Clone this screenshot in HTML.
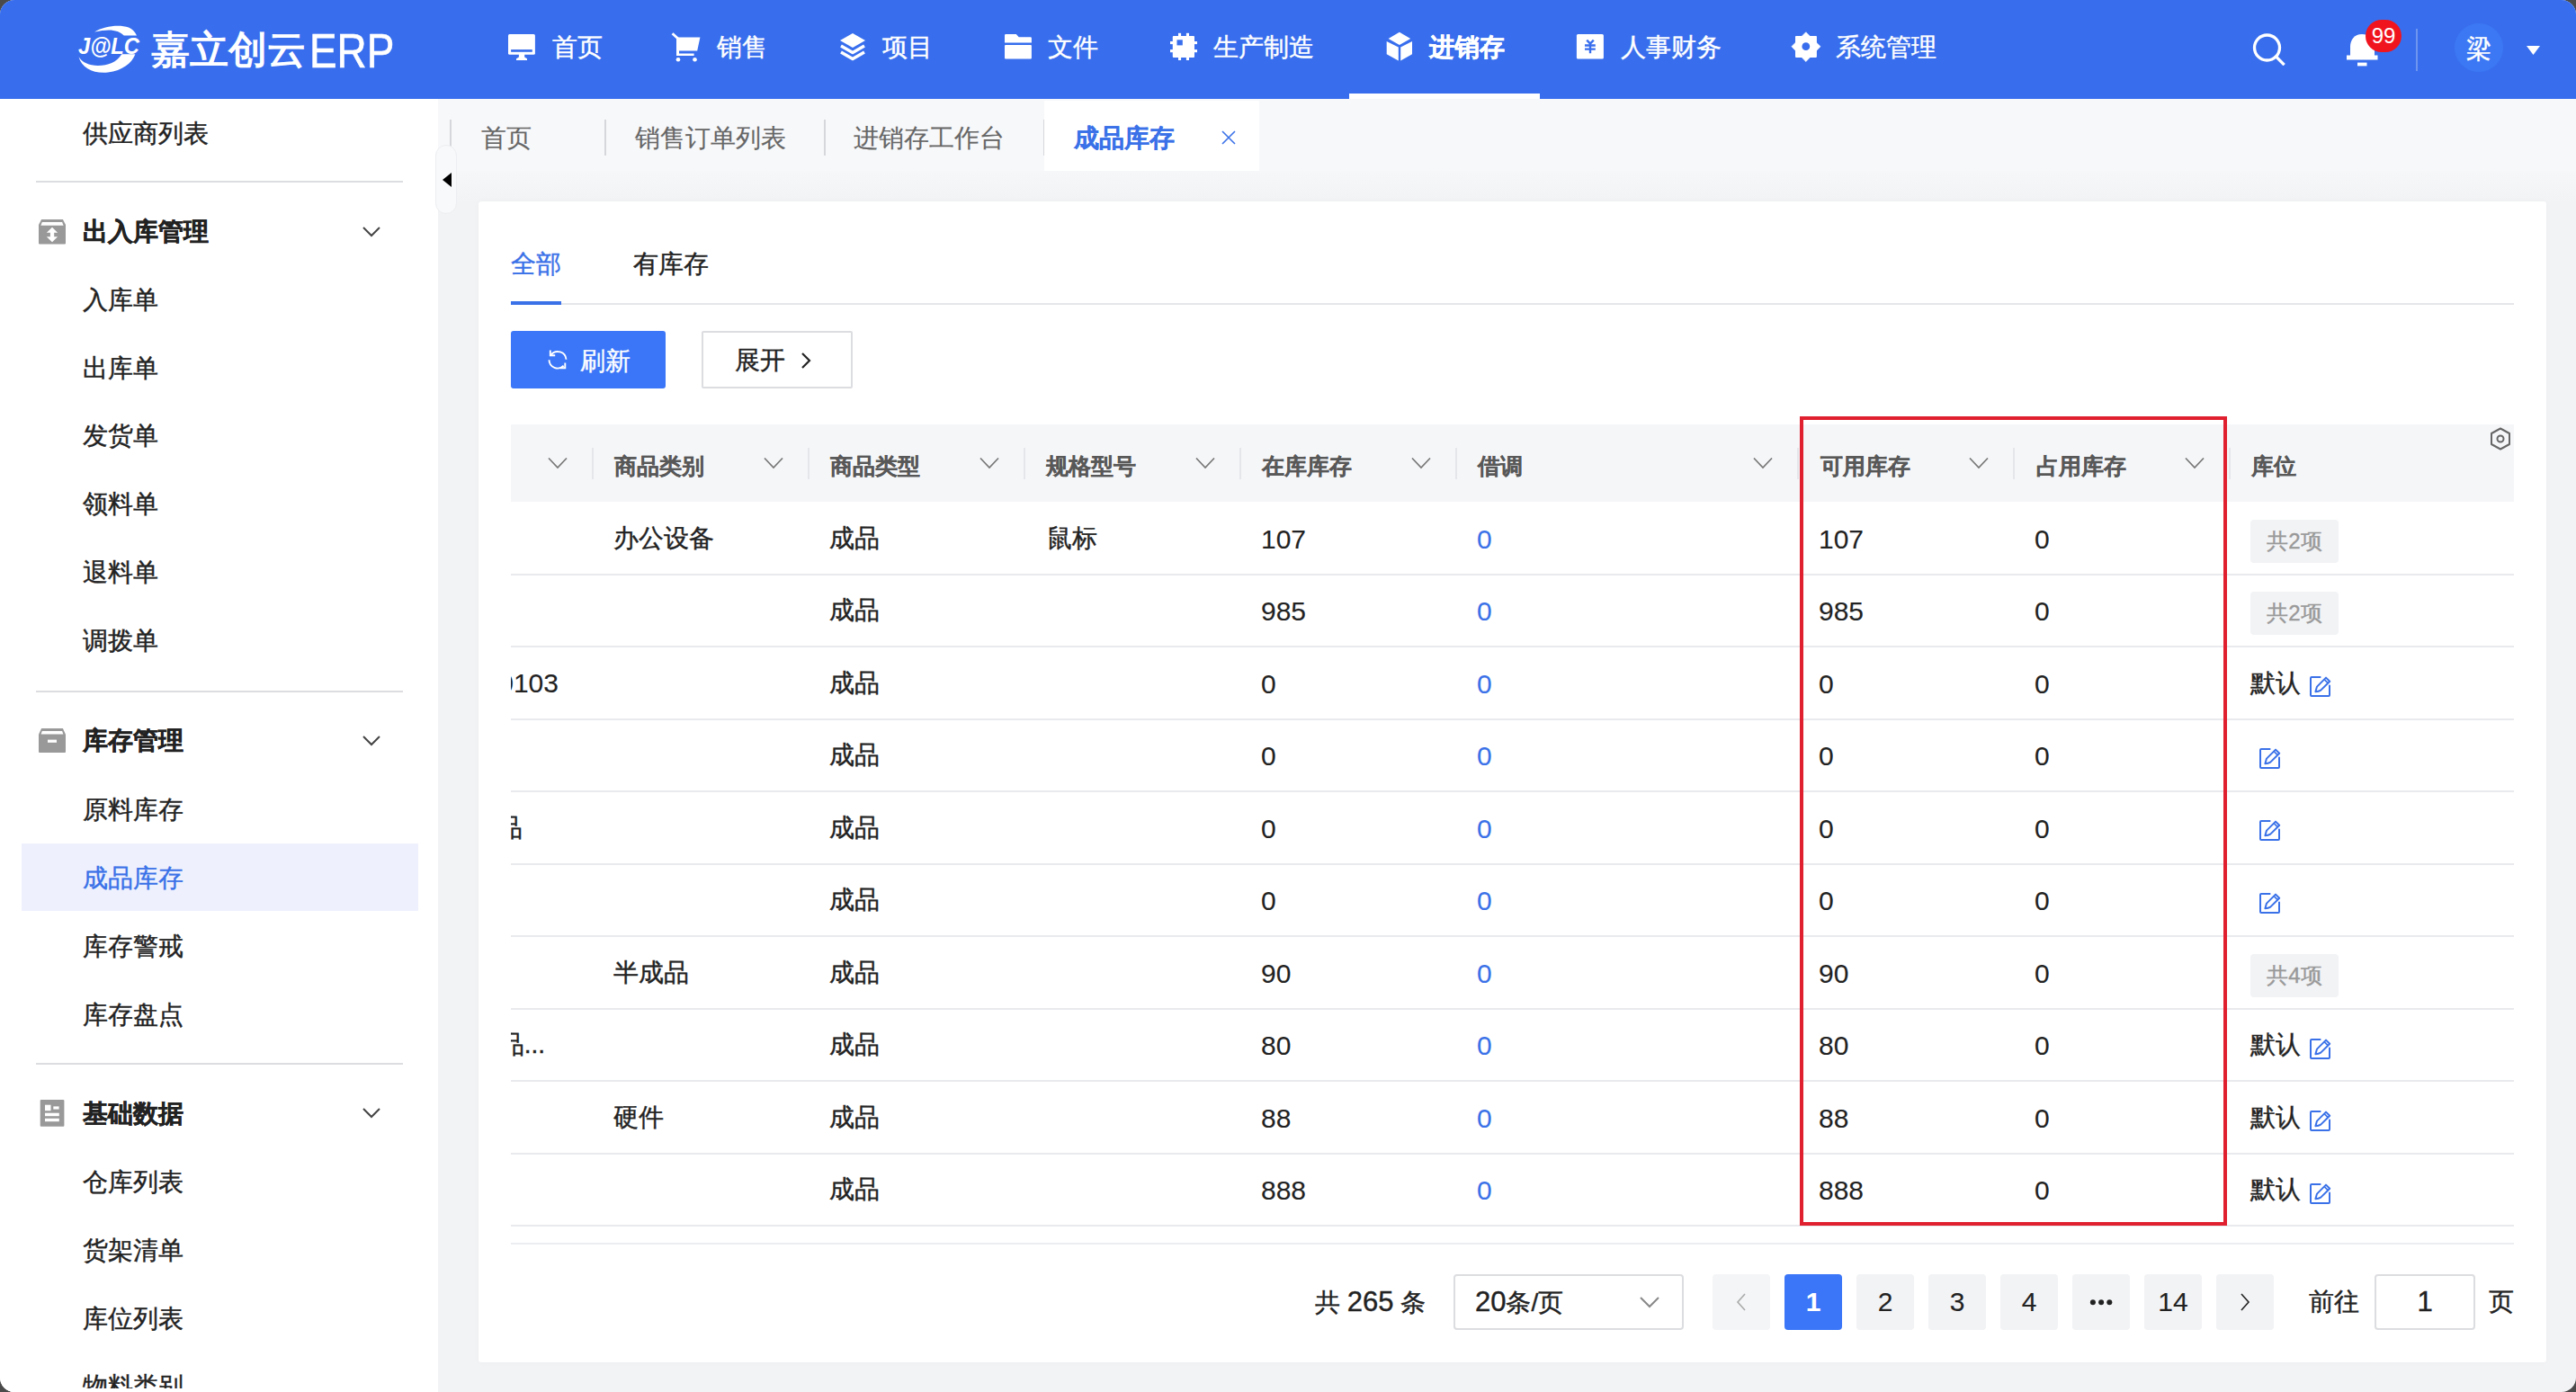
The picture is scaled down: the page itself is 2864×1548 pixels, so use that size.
<!DOCTYPE html>
<html><head><meta charset="utf-8">
<style>
*{box-sizing:border-box;margin:0;padding:0}
html,body{width:2864px;height:1548px;overflow:hidden;background:#4a4a4a;font-family:"Liberation Sans",sans-serif;-webkit-text-stroke-width:0.4px}
#app{position:absolute;left:0;top:0;width:2864px;height:1548px;border-radius:16px;overflow:hidden;background:#f2f3f5}
.a{position:absolute;white-space:nowrap}
.hdr{position:absolute;left:0;top:0;width:2864px;height:110px;background:#386eed}
.nav{position:absolute;top:25px;height:56px;line-height:56px;font-size:28px;color:#fff}
.navic{position:absolute}
.side{position:absolute;left:0;top:110px;width:487px;height:1438px;background:#fff}
.si{position:absolute;left:92px;font-size:28px;line-height:40px;color:#222}
.sh{position:absolute;left:92px;font-size:28px;line-height:40px;color:#222;font-weight:bold}
.sdiv{position:absolute;left:40px;width:408px;height:2px;background:#dcdde0}
.schev{position:absolute;left:403px}
.tabbar{position:absolute;left:487px;top:110px;width:2377px;height:80px;background:#f7f8fa}
.tabgrad{position:absolute;left:487px;top:190px;width:2377px;height:34px;background:linear-gradient(#f6f7f9,#f2f3f5)}
.tab{position:absolute;top:134px;font-size:28px;line-height:40px;color:#666;-webkit-text-stroke-width:0.15px}
.tdiv{position:absolute;top:133px;width:2px;height:40px;background:#d6d7da}
.card{position:absolute;left:532px;top:224px;width:2299px;height:1291px;background:#fff;border-radius:3px;box-shadow:0 0 6px rgba(0,0,0,0.03)}
.th{position:absolute;top:500px;font-size:25px;line-height:36px;color:#585858;font-weight:bold;-webkit-text-stroke-width:0.15px}
.hch{position:absolute;top:508px}
.hdiv{position:absolute;top:498px;width:2px;height:35px;background:#e4e6ea}
.rdiv{position:absolute;left:568px;width:2227px;height:2px;background:#e9eaed}
.c{position:absolute;font-size:28px;line-height:40px;color:#222}
.n{position:absolute;font-size:30px;line-height:40px;color:#222;-webkit-text-stroke-width:0.1px}
.bl{color:#3a71e8}
.tag{position:absolute;left:2502px;width:98px;height:48px;background:#f2f3f5;border-radius:4px;color:#999;font-size:24px;line-height:48px;text-align:center}
.pg{position:absolute;top:1417px;width:64px;height:62px;background:#f2f3f5;border-radius:4px;font-size:30px;line-height:62px;text-align:center;color:#222;-webkit-text-stroke-width:0.1px}
</style></head><body>
<div id="app">
<!-- HEADER -->
<div class="hdr"></div>
<svg class="a" style="left:80px;top:20px" width="90" height="70" viewBox="0 0 90 70">
 <path d="M25,15.6 C36,9 52,7 63,10.5 C67,12 70,15 72,19.6 L57.8,19.6 C52,13.5 42,11.5 25,15.6 Z" fill="#fff"/>
 <path d="M7.5,43.2 C11,56 24,62 40,60.5 C56,58.5 67,50 70.4,40.2 L55.3,40.2 C50,49 40,53 29,53 C19,53 11,49 7.5,43.2 Z" fill="#fff"/>
 <text x="7" y="39.7" font-family="Liberation Sans" font-weight="bold" font-style="italic" font-size="25.5" textLength="68" lengthAdjust="spacingAndGlyphs" fill="#fff">J@LC</text>
</svg>
<div class="a" style="left:168px;top:25px;font-size:43px;line-height:60px;color:#fff;-webkit-text-stroke:1.3px #fff">嘉立创云</div><div class="a" style="left:344px;top:21px;font-size:54px;line-height:70px;color:#fff;transform:scaleX(0.85);transform-origin:0 0;-webkit-text-stroke:0.6px #fff">ERP</div>

<!-- nav icons -->
<svg class="navic" style="left:564px;top:37px" width="32" height="32" viewBox="0 0 32 32"><rect x="1" y="1" width="29.9" height="22.7" rx="1.5" fill="#fff"/><rect x="4.1" y="18.1" width="23.7" height="2.7" fill="#386eed"/><path d="M12.9,23 L19.2,23 L19.2,26.6 L22,28.2 L22,30 L10,30 L10,28.2 L12.9,26.6 Z" fill="#fff"/></svg>
<div class="nav" style="left:614px">首页</div>
<svg class="navic" style="left:746px;top:36px" width="34" height="34" viewBox="0 0 34 34"><path d="M1.6,1.2 L7.6,6.8" stroke="#fff" stroke-width="2.8"/><path d="M6,5.5 L32.4,5.5 L29.2,20.4 L9,20.4 L9,23.6 L25.6,23.6 L25.6,26.1 L6,26.1 Z" fill="#fff"/><circle cx="8" cy="30.3" r="2.3" fill="#fff"/><circle cx="26.5" cy="30.3" r="2.3" fill="#fff"/></svg>
<div class="nav" style="left:797px">销售</div>
<svg class="navic" style="left:932px;top:36px" width="32" height="32" viewBox="0 0 32 32"><path d="M16 1 L30 9 L16 17 L2 9 Z" fill="#fff"/><path d="M3 15 L16 22.5 L29 15" stroke="#fff" stroke-width="3.5" fill="none" stroke-linejoin="round"/><path d="M3 22 L16 29.5 L29 22" stroke="#fff" stroke-width="3.5" fill="none" stroke-linejoin="round"/></svg>
<div class="nav" style="left:981px">项目</div>
<svg class="navic" style="left:1116px;top:37px" width="32" height="30" viewBox="0 0 32 30"><path d="M1,2.2 Q1,1 2.2,1 L13.8,1 L16.7,4.3 L29.7,4.3 Q30.9,4.3 30.9,5.5 L30.9,10.6 L1,10.6 Z" fill="#fff"/><rect x="1" y="12.9" width="29.9" height="15.6" rx="1" fill="#fff"/></svg>
<div class="nav" style="left:1165px">文件</div>
<svg class="navic" style="left:1300px;top:36px" width="32" height="32" viewBox="0 0 32 32"><rect x="3.8" y="3.9" width="24.2" height="24" rx="1" fill="#fff"/><g fill="#fff"><rect x="10" y="0.8" width="3.1" height="3.5"/><rect x="18.9" y="0.8" width="3.1" height="3.5"/><rect x="10" y="27.5" width="3.1" height="3.5"/><rect x="18.9" y="27.5" width="3.1" height="3.5"/><rect x="1" y="10" width="3.2" height="3.1"/><rect x="1" y="19.1" width="3.2" height="3.1"/><rect x="27.6" y="10" width="3.4" height="3.1"/><rect x="27.6" y="19.1" width="3.4" height="3.1"/></g><rect x="8.5" y="8.3" width="6.3" height="6.1" fill="#386eed"/></svg>
<div class="nav" style="left:1349px">生产制造</div>
<svg class="navic" style="left:1540px;top:34px" width="32" height="36" viewBox="0 0 32 36"><path d="M15.9,1.7 L28.2,9.1 L15.9,15.9 L3.6,9.1 Z" fill="#fff"/><path d="M1.7,12 L14.8,18.6 L14.8,33.5 L1.7,26.3 Z" fill="#fff"/><path d="M30,12 L17.2,18.6 L17.2,33.5 L30,26.3 Z" fill="#fff"/></svg>
<div class="nav" style="left:1589px;font-weight:bold">进销存</div>
<div class="a" style="left:1500px;top:104px;width:212px;height:6px;background:#fff"></div>
<svg class="navic" style="left:1752px;top:38px" width="32" height="28" viewBox="0 0 32 28"><rect x="0.9" y="0" width="30" height="27.5" rx="1.5" fill="#fff"/><path d="M12.2,6.7 L16,10.6 L19.8,6.7 M10,12.5 L21.8,12.5 M10,16.6 L21.8,16.6 M16,10.6 L16,21.3" stroke="#386eed" stroke-width="2.4" fill="none"/></svg>
<div class="nav" style="left:1802px">人事财务</div>
<svg class="navic" style="left:1990px;top:35px" width="36" height="36" viewBox="0 0 36 36"><path d="M17.8,0.7 L34,16.7 L17.8,33.6 L1.9,16.7 Z" fill="#fff" stroke="#fff" stroke-width="0.6" stroke-linejoin="round"/><rect x="6" y="4.9" width="23.9" height="24" rx="0.8" fill="#fff"/><circle cx="17.8" cy="16.7" r="4.4" fill="#386eed"/></svg>
<div class="nav" style="left:2041px">系统管理</div>
<!-- right icons -->
<svg class="a" style="left:2504px;top:36px" width="38" height="37" viewBox="0 0 38 37"><circle cx="16.5" cy="17" r="14" stroke="#fff" stroke-width="3.3" fill="none"/><path d="M26.5 27 L34.5 35" stroke="#fff" stroke-width="3.3" stroke-linecap="square"/></svg>
<svg class="a" style="left:2609px;top:36px" width="36" height="38" viewBox="0 0 36 38"><path d="M17 2 C9 2 4 8 4 16 L4 26 L31 26 L31 16 C31 8 25 2 17 2 Z" fill="#fff"/><rect x="0" y="25.5" width="34.5" height="5" fill="#fff"/><rect x="12" y="33.6" width="10.5" height="3.8" fill="#fff"/></svg>
<div class="a" style="left:2630px;top:22px;width:40px;height:36px;border-radius:18px;background:#f0141e;color:#fff;font-size:24px;line-height:36px;text-align:center;-webkit-text-stroke-width:0">99</div>
<div class="a" style="left:2686px;top:32px;width:2px;height:47px;background:#6e96f0"></div>
<div class="a" style="left:2729px;top:26px;width:54px;height:54px;border-radius:27px;background:#3c78f3"></div>
<div class="a" style="left:2742px;top:35px;font-size:28px;line-height:40px;color:#fff">梁</div>
<svg class="a" style="left:2809px;top:51px" width="15" height="10" viewBox="0 0 15 10"><path d="M0 0 L15 0 L7.5 10 Z" fill="#fff"/></svg>

<!-- SIDEBAR -->
<div class="side"></div>
<div class="si" style="top:129px">供应商列表</div>
<div class="sdiv" style="top:201px"></div>
<svg class="a" style="left:43px;top:244px" width="30" height="28" viewBox="0 0 30 28"><path d="M3.1,0 L26.9,0 L30,6 L30,26.6 Q30,27.6 29,27.6 L1,27.6 Q0,27.6 0,26.6 L0,6 Z" fill="#999"/><path d="M3.8,3 L26.1,3 L27.6,6.7 L2.4,6.7 Z" fill="#fff"/><path d="M15,8.8 L21.1,14.7 L17.2,14.7 L17.2,19.2 L21.1,19.2 L15,25.2 L8.8,19.2 L12.9,19.2 L12.9,14.7 L8.8,14.7 Z" fill="#fff"/></svg>
<div class="sh" style="top:238px">出入库管理</div>
<svg class="schev" style="top:252px" width="20" height="12" viewBox="0 0 20 12"><path d="M1 1 L10 10 L19 1" stroke="#444" stroke-width="2" fill="none"/></svg>
<div class="si" style="top:314px">入库单</div>
<div class="si" style="top:390px">出库单</div>
<div class="si" style="top:465px">发货单</div>
<div class="si" style="top:541px">领料单</div>
<div class="si" style="top:617px">退料单</div>
<div class="si" style="top:693px">调拨单</div>
<div class="sdiv" style="top:768px"></div>
<svg class="a" style="left:43px;top:810px" width="30" height="28" viewBox="0 0 30 28"><path d="M3.1,0 L26.9,0 L30,6.7 L30,26 Q30,27 29,27 L1,27 Q0,27 0,26 L0,6.7 Z" fill="#999"/><path d="M3.8,2.9 L26.1,2.9 L27.4,6.5 L2.6,6.5 Z" fill="#fff"/><rect x="10" y="12.6" width="10" height="3.2" fill="#fff"/></svg>
<div class="sh" style="top:804px">库存管理</div>
<svg class="schev" style="top:818px" width="20" height="12" viewBox="0 0 20 12"><path d="M1 1 L10 10 L19 1" stroke="#444" stroke-width="2" fill="none"/></svg>
<div class="si" style="top:881px">原料库存</div>
<div class="a" style="left:24px;top:938px;width:441px;height:75px;background:#eef1fd"></div>
<div class="si" style="top:957px;color:#3a71e8">成品库存</div>
<div class="si" style="top:1033px">库存警戒</div>
<div class="si" style="top:1109px">库存盘点</div>
<div class="sdiv" style="top:1182px"></div>
<svg class="a" style="left:44px;top:1222px" width="28" height="31" viewBox="0 0 28 31"><rect x="0.7" y="0.9" width="26.7" height="29.9" rx="1" fill="#999"/><rect x="6" y="6.7" width="6.5" height="6.5" fill="#fff"/><rect x="15.3" y="8.4" width="6.3" height="3.2" fill="#fff"/><rect x="6" y="15.7" width="15.8" height="3.5" fill="#fff"/><rect x="6" y="21.8" width="15.8" height="3.4" fill="#fff"/></svg>
<div class="sh" style="top:1219px">基础数据</div>
<svg class="schev" style="top:1232px" width="20" height="12" viewBox="0 0 20 12"><path d="M1 1 L10 10 L19 1" stroke="#444" stroke-width="2" fill="none"/></svg>
<div class="si" style="top:1295px">仓库列表</div>
<div class="si" style="top:1371px">货架清单</div>
<div class="si" style="top:1447px">库位列表</div>
<div class="si" style="top:1522px">物料类别</div>
<div class="a" style="left:0;top:1544px;width:487px;height:4px;background:#fff"></div>

<!-- TAB BAR -->
<div class="tabbar"></div><div class="tabgrad"></div>
<div class="tdiv" style="left:500px"></div>
<div class="tab" style="left:535px">首页</div>
<div class="tdiv" style="left:672px"></div>
<div class="tab" style="left:706px">销售订单列表</div>
<div class="tdiv" style="left:916px"></div>
<div class="tab" style="left:949px">进销存工作台</div>
<div class="tdiv" style="left:1160px"></div>
<div class="a" style="left:1161px;top:112px;width:239px;height:78px;background:#fff"></div>
<div class="tab" style="left:1194px;color:#3a71e8;font-weight:bold">成品库存</div>
<svg class="a" style="left:1358px;top:145px" width="16" height="16" viewBox="0 0 16 16"><path d="M1 1 L15 15 M15 1 L1 15" stroke="#3a71e8" stroke-width="1.6"/></svg>
<!-- handle -->
<div class="a" style="left:484px;top:161px;width:24px;height:77px;border-radius:12px;background:#f8f9fa;border:1px solid #eceef1"></div>
<svg class="a" style="left:492px;top:192px" width="10" height="16" viewBox="0 0 10 16"><path d="M10 0 L0 8 L10 16 Z" fill="#000"/></svg>

<!-- CARD -->
<div class="card"></div>
<div class="a" style="left:568px;top:274px;font-size:28px;line-height:40px;color:#3a71e8">全部</div>
<div class="a" style="left:704px;top:274px;font-size:28px;line-height:40px;color:#222">有库存</div>
<div class="a" style="left:568px;top:337px;width:2227px;height:2px;background:#e5e6e9"></div>
<div class="a" style="left:568px;top:335px;width:56px;height:4px;background:#3a71e8"></div>
<div class="a" style="left:568px;top:368px;width:172px;height:64px;background:#3a76f7;border-radius:3px"></div>
<svg class="a" style="left:606px;top:386px" width="28" height="28" viewBox="0 0 28 28" fill="none" stroke="#fff" stroke-width="1.9"><path d="M23.5,13.8 A9.5,9.5 0 0 0 6.6,8.6"/><path d="M5.8,3.6 L5.8,9.3 L11.2,9.3"/><path d="M4.5,14.2 A9.5,9.5 0 0 0 20.6,20.8"/><path d="M22.3,17.6 L22.3,23.3 L16.9,23.3"/></svg>
<div class="a" style="left:645px;top:382px;font-size:28px;line-height:40px;color:#fff">刷新</div>
<div class="a" style="left:780px;top:368px;width:168px;height:64px;background:#fff;border:2px solid #dcdde0;border-radius:2px"></div>
<div class="a" style="left:817px;top:381px;font-size:28px;line-height:40px;color:#222">展开</div>
<svg class="a" style="left:890px;top:392px" width="13" height="18" viewBox="0 0 13 18"><path d="M2 1 L10 9 L2 17" stroke="#222" stroke-width="2.2" fill="none"/></svg>

<!-- TABLE HEADER -->
<div class="a" style="left:568px;top:472px;width:2227px;height:86px;background:#f5f6f8"></div>
<svg class="hch" style="left:609px" width="22" height="14" viewBox="0 0 22 14"><path d="M1 1.5 L11 12 L21 1.5" stroke="#777" stroke-width="1.7" fill="none"/></svg>
<div class="hdiv" style="left:658px"></div>
<div class="th" style="left:683px">商品类别</div>
<svg class="hch" style="left:849px" width="22" height="14" viewBox="0 0 22 14"><path d="M1 1.5 L11 12 L21 1.5" stroke="#777" stroke-width="1.7" fill="none"/></svg>
<div class="hdiv" style="left:898px"></div>
<div class="th" style="left:923px">商品类型</div>
<svg class="hch" style="left:1089px" width="22" height="14" viewBox="0 0 22 14"><path d="M1 1.5 L11 12 L21 1.5" stroke="#777" stroke-width="1.7" fill="none"/></svg>
<div class="hdiv" style="left:1138px"></div>
<div class="th" style="left:1163px">规格型号</div>
<svg class="hch" style="left:1329px" width="22" height="14" viewBox="0 0 22 14"><path d="M1 1.5 L11 12 L21 1.5" stroke="#777" stroke-width="1.7" fill="none"/></svg>
<div class="hdiv" style="left:1378px"></div>
<div class="th" style="left:1403px">在库库存</div>
<svg class="hch" style="left:1569px" width="22" height="14" viewBox="0 0 22 14"><path d="M1 1.5 L11 12 L21 1.5" stroke="#777" stroke-width="1.7" fill="none"/></svg>
<div class="hdiv" style="left:1618px"></div>
<div class="th" style="left:1643px">借调</div>
<svg class="hch" style="left:1949px" width="22" height="14" viewBox="0 0 22 14"><path d="M1 1.5 L11 12 L21 1.5" stroke="#777" stroke-width="1.7" fill="none"/></svg>
<div class="hdiv" style="left:1998px"></div>
<div class="th" style="left:2024px">可用库存</div>
<svg class="hch" style="left:2189px" width="22" height="14" viewBox="0 0 22 14"><path d="M1 1.5 L11 12 L21 1.5" stroke="#777" stroke-width="1.7" fill="none"/></svg>
<div class="hdiv" style="left:2238px"></div>
<div class="th" style="left:2264px">占用库存</div>
<svg class="hch" style="left:2429px" width="22" height="14" viewBox="0 0 22 14"><path d="M1 1.5 L11 12 L21 1.5" stroke="#777" stroke-width="1.7" fill="none"/></svg>
<div class="hdiv" style="left:2478px"></div>
<div class="th" style="left:2503px">库位</div>
<svg class="a" style="left:2768px;top:475px" width="24" height="26" viewBox="0 0 24 26"><path d="M12 1.5 L22 7 L22 19 L12 24.5 L2 19 L2 7 Z" stroke="#666" stroke-width="2" fill="none" stroke-linejoin="round"/><circle cx="12" cy="13" r="3.5" stroke="#666" stroke-width="2" fill="none"/></svg>

<!-- ROWS (generated) -->
<div id="rows"><div class="rdiv" style="top:637.5px"></div>
<div class="c" style="left:682px;top:578.5px">办公设备</div>
<div class="c" style="left:922px;top:578.5px">成品</div>
<div class="c" style="left:1164px;top:578.5px">鼠标</div>
<div class="n" style="left:1402px;top:579.5px">107</div>
<div class="n bl" style="left:1642px;top:579.5px">0</div>
<div class="n" style="left:2022px;top:579.5px">107</div>
<div class="n" style="left:2262px;top:579.5px">0</div>
<div class="tag" style="top:577.5px">共2项</div>
<div class="rdiv" style="top:718.0px"></div>
<div class="c" style="left:922px;top:659.0px">成品</div>
<div class="n" style="left:1402px;top:660.0px">985</div>
<div class="n bl" style="left:1642px;top:660.0px">0</div>
<div class="n" style="left:2022px;top:660.0px">985</div>
<div class="n" style="left:2262px;top:660.0px">0</div>
<div class="tag" style="top:658.0px">共2项</div>
<div class="rdiv" style="top:798.5px"></div>
<div class="a" style="left:568px;top:739.5px;width:60px;height:40px;overflow:hidden"><div class="n" style="right:7px;top:0">20103</div></div>
<div class="c" style="left:922px;top:739.5px">成品</div>
<div class="n" style="left:1402px;top:740.5px">0</div>
<div class="n bl" style="left:1642px;top:740.5px">0</div>
<div class="n" style="left:2022px;top:740.5px">0</div>
<div class="n" style="left:2262px;top:740.5px">0</div>
<div class="c" style="left:2502px;top:739.5px">默认</div>
<div class="a" style="left:2567px;top:751.0px"><svg width="26" height="26" viewBox="0 0 26 26"><path d="M12.6 2 L3 2 Q2 2 2 3 L2 22 Q2 23 3 23 L22 23 Q23 23 23 22 L23 11.6" stroke="#3a71e8" stroke-width="2" fill="none" stroke-linecap="round"/><path d="M7.4 18.2 L9 12.6 L19 2.6 L23.2 6.8 L13.2 16.6 Q11 18 7.4 18.2 Z" stroke="#3a71e8" stroke-width="2" fill="none" stroke-linejoin="round"/><path d="M17.2 4.6 L21.2 8.6" stroke="#3a71e8" stroke-width="1.6"/></svg></div>
<div class="rdiv" style="top:879.0px"></div>
<div class="c" style="left:922px;top:820.0px">成品</div>
<div class="n" style="left:1402px;top:821.0px">0</div>
<div class="n bl" style="left:1642px;top:821.0px">0</div>
<div class="n" style="left:2022px;top:821.0px">0</div>
<div class="n" style="left:2262px;top:821.0px">0</div>
<div class="a" style="left:2511px;top:830.5px"><svg width="26" height="26" viewBox="0 0 26 26"><path d="M12.6 2 L3 2 Q2 2 2 3 L2 22 Q2 23 3 23 L22 23 Q23 23 23 22 L23 11.6" stroke="#3a71e8" stroke-width="2" fill="none" stroke-linecap="round"/><path d="M7.4 18.2 L9 12.6 L19 2.6 L23.2 6.8 L13.2 16.6 Q11 18 7.4 18.2 Z" stroke="#3a71e8" stroke-width="2" fill="none" stroke-linejoin="round"/><path d="M17.2 4.6 L21.2 8.6" stroke="#3a71e8" stroke-width="1.6"/></svg></div>
<div class="rdiv" style="top:959.5px"></div>
<div class="a" style="left:568px;top:900.5px;width:40px;height:40px;overflow:hidden"><div class="c" style="right:27px;top:0">成品</div></div>
<div class="c" style="left:922px;top:900.5px">成品</div>
<div class="n" style="left:1402px;top:901.5px">0</div>
<div class="n bl" style="left:1642px;top:901.5px">0</div>
<div class="n" style="left:2022px;top:901.5px">0</div>
<div class="n" style="left:2262px;top:901.5px">0</div>
<div class="a" style="left:2511px;top:911.0px"><svg width="26" height="26" viewBox="0 0 26 26"><path d="M12.6 2 L3 2 Q2 2 2 3 L2 22 Q2 23 3 23 L22 23 Q23 23 23 22 L23 11.6" stroke="#3a71e8" stroke-width="2" fill="none" stroke-linecap="round"/><path d="M7.4 18.2 L9 12.6 L19 2.6 L23.2 6.8 L13.2 16.6 Q11 18 7.4 18.2 Z" stroke="#3a71e8" stroke-width="2" fill="none" stroke-linejoin="round"/><path d="M17.2 4.6 L21.2 8.6" stroke="#3a71e8" stroke-width="1.6"/></svg></div>
<div class="rdiv" style="top:1040.0px"></div>
<div class="c" style="left:922px;top:981.0px">成品</div>
<div class="n" style="left:1402px;top:982.0px">0</div>
<div class="n bl" style="left:1642px;top:982.0px">0</div>
<div class="n" style="left:2022px;top:982.0px">0</div>
<div class="n" style="left:2262px;top:982.0px">0</div>
<div class="a" style="left:2511px;top:991.5px"><svg width="26" height="26" viewBox="0 0 26 26"><path d="M12.6 2 L3 2 Q2 2 2 3 L2 22 Q2 23 3 23 L22 23 Q23 23 23 22 L23 11.6" stroke="#3a71e8" stroke-width="2" fill="none" stroke-linecap="round"/><path d="M7.4 18.2 L9 12.6 L19 2.6 L23.2 6.8 L13.2 16.6 Q11 18 7.4 18.2 Z" stroke="#3a71e8" stroke-width="2" fill="none" stroke-linejoin="round"/><path d="M17.2 4.6 L21.2 8.6" stroke="#3a71e8" stroke-width="1.6"/></svg></div>
<div class="rdiv" style="top:1120.5px"></div>
<div class="c" style="left:682px;top:1061.5px">半成品</div>
<div class="c" style="left:922px;top:1061.5px">成品</div>
<div class="n" style="left:1402px;top:1062.5px">90</div>
<div class="n bl" style="left:1642px;top:1062.5px">0</div>
<div class="n" style="left:2022px;top:1062.5px">90</div>
<div class="n" style="left:2262px;top:1062.5px">0</div>
<div class="tag" style="top:1060.5px">共4项</div>
<div class="rdiv" style="top:1201.0px"></div>
<div class="a" style="left:568px;top:1142.0px;width:60px;height:40px;overflow:hidden"><div class="c" style="right:22px;top:0">成品...</div></div>
<div class="c" style="left:922px;top:1142.0px">成品</div>
<div class="n" style="left:1402px;top:1143.0px">80</div>
<div class="n bl" style="left:1642px;top:1143.0px">0</div>
<div class="n" style="left:2022px;top:1143.0px">80</div>
<div class="n" style="left:2262px;top:1143.0px">0</div>
<div class="c" style="left:2502px;top:1142.0px">默认</div>
<div class="a" style="left:2567px;top:1153.5px"><svg width="26" height="26" viewBox="0 0 26 26"><path d="M12.6 2 L3 2 Q2 2 2 3 L2 22 Q2 23 3 23 L22 23 Q23 23 23 22 L23 11.6" stroke="#3a71e8" stroke-width="2" fill="none" stroke-linecap="round"/><path d="M7.4 18.2 L9 12.6 L19 2.6 L23.2 6.8 L13.2 16.6 Q11 18 7.4 18.2 Z" stroke="#3a71e8" stroke-width="2" fill="none" stroke-linejoin="round"/><path d="M17.2 4.6 L21.2 8.6" stroke="#3a71e8" stroke-width="1.6"/></svg></div>
<div class="rdiv" style="top:1281.5px"></div>
<div class="c" style="left:682px;top:1222.5px">硬件</div>
<div class="c" style="left:922px;top:1222.5px">成品</div>
<div class="n" style="left:1402px;top:1223.5px">88</div>
<div class="n bl" style="left:1642px;top:1223.5px">0</div>
<div class="n" style="left:2022px;top:1223.5px">88</div>
<div class="n" style="left:2262px;top:1223.5px">0</div>
<div class="c" style="left:2502px;top:1222.5px">默认</div>
<div class="a" style="left:2567px;top:1234.0px"><svg width="26" height="26" viewBox="0 0 26 26"><path d="M12.6 2 L3 2 Q2 2 2 3 L2 22 Q2 23 3 23 L22 23 Q23 23 23 22 L23 11.6" stroke="#3a71e8" stroke-width="2" fill="none" stroke-linecap="round"/><path d="M7.4 18.2 L9 12.6 L19 2.6 L23.2 6.8 L13.2 16.6 Q11 18 7.4 18.2 Z" stroke="#3a71e8" stroke-width="2" fill="none" stroke-linejoin="round"/><path d="M17.2 4.6 L21.2 8.6" stroke="#3a71e8" stroke-width="1.6"/></svg></div>
<div class="rdiv" style="top:1362.0px"></div>
<div class="c" style="left:922px;top:1303.0px">成品</div>
<div class="n" style="left:1402px;top:1304.0px">888</div>
<div class="n bl" style="left:1642px;top:1304.0px">0</div>
<div class="n" style="left:2022px;top:1304.0px">888</div>
<div class="n" style="left:2262px;top:1304.0px">0</div>
<div class="c" style="left:2502px;top:1303.0px">默认</div>
<div class="a" style="left:2567px;top:1314.5px"><svg width="26" height="26" viewBox="0 0 26 26"><path d="M12.6 2 L3 2 Q2 2 2 3 L2 22 Q2 23 3 23 L22 23 Q23 23 23 22 L23 11.6" stroke="#3a71e8" stroke-width="2" fill="none" stroke-linecap="round"/><path d="M7.4 18.2 L9 12.6 L19 2.6 L23.2 6.8 L13.2 16.6 Q11 18 7.4 18.2 Z" stroke="#3a71e8" stroke-width="2" fill="none" stroke-linejoin="round"/><path d="M17.2 4.6 L21.2 8.6" stroke="#3a71e8" stroke-width="1.6"/></svg></div></div><!--/rows-->

<!-- red box -->
<div class="a" style="left:2001px;top:463px;width:475px;height:900px;border:4px solid #e0202e"></div>

<!-- pagination -->
<div class="a" style="left:568px;top:1382px;width:2227px;height:2px;background:#ebedf0"></div>
<div class="a" style="left:1462px;top:1428px;font-size:28px;line-height:40px;color:#222">共 <span style="font-size:31px">265</span> 条</div>
<div class="a" style="left:1616px;top:1417px;width:256px;height:62px;border:2px solid #dcdde0;border-radius:4px"></div>
<div class="a" style="left:1640px;top:1428px;font-size:28px;line-height:40px;color:#222"><span style="font-size:31px">20</span>条/页</div>
<svg class="a" style="left:1823px;top:1442px" width="22" height="13" viewBox="0 0 22 13"><path d="M1 1 L11 11 L21 1" stroke="#888" stroke-width="2" fill="none"/></svg>
<div class="pg" style="left:1904px;background:#f4f5f7"><svg width="12" height="20" viewBox="0 0 12 20" style="margin-top:21px"><path d="M10 1 L2 10 L10 19" stroke="#aaa" stroke-width="1.6" fill="none"/></svg></div>
<div class="pg" style="left:1984px;background:#3a76f7;color:#fff;font-weight:bold">1</div>
<div class="pg" style="left:2064px">2</div>
<div class="pg" style="left:2144px">3</div>
<div class="pg" style="left:2224px">4</div>
<div class="pg" style="left:2304px"><svg width="64" height="62" viewBox="0 0 64 62" style="position:absolute;left:0;top:0"><circle cx="22.9" cy="31.3" r="3" fill="#222"/><circle cx="32.1" cy="31.3" r="3" fill="#222"/><circle cx="41.3" cy="31.3" r="3" fill="#222"/></svg></div>
<div class="pg" style="left:2384px">14</div>
<div class="pg" style="left:2464px"><svg width="12" height="20" viewBox="0 0 12 20" style="margin-top:21px"><path d="M2 1 L10 10 L2 19" stroke="#222" stroke-width="1.6" fill="none"/></svg></div>
<div class="a" style="left:2567px;top:1428px;font-size:28px;line-height:40px;color:#222">前往</div>
<div class="a" style="left:2640px;top:1417px;width:112px;height:62px;border:2px solid #dcdde0;border-radius:4px;font-size:31px;line-height:58px;text-align:center;color:#222">1</div>
<div class="a" style="left:2767px;top:1428px;font-size:28px;line-height:40px;color:#222">页</div>
</div>
</body></html>
